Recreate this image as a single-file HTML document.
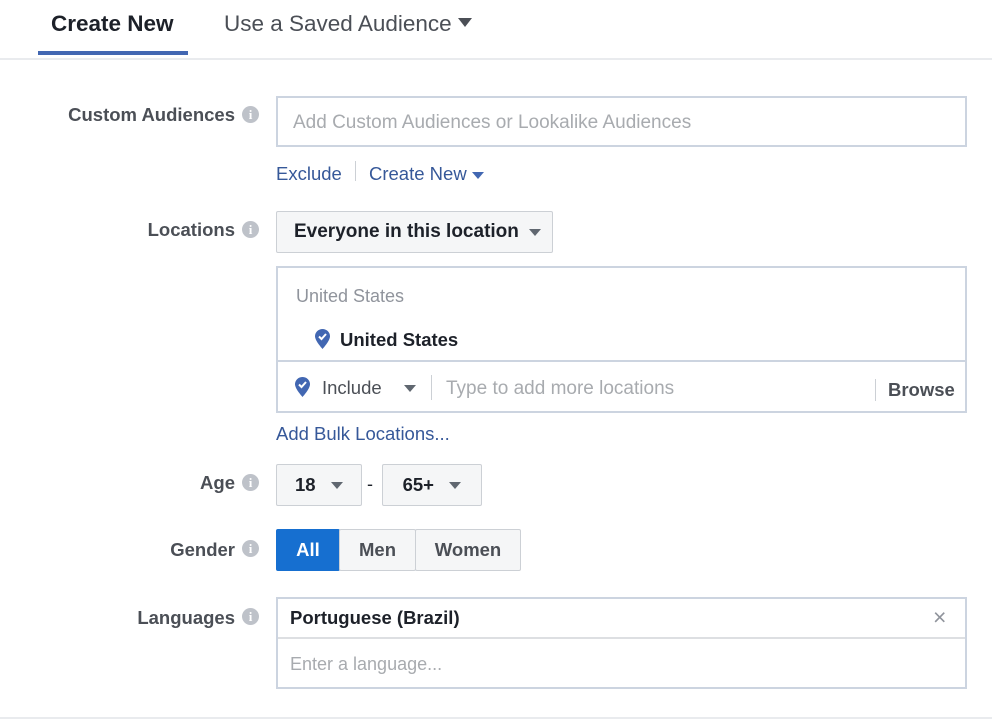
<!DOCTYPE html>
<html><head><meta charset="utf-8"><style>
*{box-sizing:border-box;margin:0;padding:0}
body{width:992px;height:725px;background:#fff;font-family:"Liberation Sans",Arial,sans-serif;position:relative;overflow:hidden;color:#1d2129}
.a{position:absolute;white-space:nowrap}
.lbl{font-size:18.5px;font-weight:bold;color:#4b4f56;text-align:right;width:235px;left:0}
.info{position:absolute;width:17px;height:17px;border-radius:50%;background:#bec2c9;color:#fff;font:bold 13px/17px "Liberation Serif",serif;text-align:center;left:242px}
.link{color:#365899;font-size:18.5px}
.tri{display:inline-block;width:0;height:0;border-left:6px solid transparent;border-right:6px solid transparent;border-top:7px solid #606770;vertical-align:middle}
.btn{position:absolute;background:#f5f6f7;border:1px solid #ccd0d5;border-radius:2px;font-size:18.5px;font-weight:bold;color:#1d2129;display:flex;align-items:center;justify-content:center}
.box{position:absolute;border:2px solid #ccd4e0;background:#fff}
</style></head><body>
<div class="a" style="left:51px;top:11px;font-size:22.5px;font-weight:bold;color:#1d2129">Create New</div>
<div class="a" style="left:38px;top:51px;width:150px;height:4px;background:#4267b2"></div>
<div class="a" style="left:224px;top:11px;font-size:22.5px;color:#4b4f56">Use a Saved Audience <span class="tri" style="border-left-width:7px;border-right-width:7px;border-top-width:9px;border-top-color:#4b4f56;margin-top:-6px"></span></div>
<div class="a" style="left:0;top:58px;width:992px;height:2px;background:#e9ebee"></div>

<div class="a lbl" style="top:104px">Custom Audiences</div><div class="info" style="top:106px">i</div>
<div class="box" style="left:276px;top:96px;width:691px;height:51px"></div>
<div class="a" style="left:293px;top:112px;font-size:19px;color:#a8abaf">Add Custom Audiences or Lookalike Audiences</div>
<div class="a link" style="left:276px;top:163px">Exclude</div>
<div class="a" style="left:355px;top:161px;width:1px;height:20px;background:#ccd0d5"></div>
<div class="a link" style="left:369px;top:163px">Create New <span class="tri" style="border-top-color:#4267b2"></span></div>

<div class="a lbl" style="top:219px">Locations</div><div class="info" style="top:221px">i</div>
<div class="btn" style="left:276px;top:211px;width:277px;height:42px;justify-content:flex-start;padding-left:17px;font-size:19px">Everyone in this location&nbsp;&nbsp;<span class="tri"></span></div>
<div class="box" style="left:276px;top:266px;width:691px;height:147px"></div>
<div class="a" style="left:278px;top:360px;width:687px;height:2px;background:#ccd4e0"></div>
<div class="a" style="left:296px;top:286px;font-size:18px;color:#90949c">United States</div>
<svg class="a" style="left:315px;top:329px" width="15" height="20" viewBox="0 0 15 20"><path d="M7.5 0C3.4 0 0 3.2 0 7.3 0 12 7.5 20 7.5 20S15 12 15 7.3C15 3.2 11.6 0 7.5 0z" fill="#4267b2"/><path d="M4 7.5l2.5 2.5 4.5-5" stroke="#fff" stroke-width="2" fill="none"/></svg>
<div class="a" style="left:340px;top:329px;font-size:18.5px;font-weight:bold">United States</div>
<svg class="a" style="left:295px;top:377px" width="15" height="20" viewBox="0 0 15 20"><path d="M7.5 0C3.4 0 0 3.2 0 7.3 0 12 7.5 20 7.5 20S15 12 15 7.3C15 3.2 11.6 0 7.5 0z" fill="#4267b2"/><path d="M4 7.5l2.5 2.5 4.5-5" stroke="#fff" stroke-width="2" fill="none"/></svg>
<div class="a" style="left:322px;top:377px;font-size:18.5px;color:#4b4f56">Include</div>
<span class="a tri" style="left:404px;top:385px"></span>
<div class="a" style="left:431px;top:375px;width:1px;height:25px;background:#ccd0d5"></div>
<div class="a" style="left:446px;top:378px;font-size:19px;color:#a8abaf">Type to add more locations</div>
<div class="a" style="left:875px;top:379px;width:1px;height:22px;background:#ccd0d5"></div>
<div class="a" style="left:888px;top:379px;font-size:18.5px;font-weight:bold;color:#4b4f56">Browse</div>
<div class="a link" style="left:276px;top:423px">Add Bulk Locations...</div>

<div class="a lbl" style="top:472px">Age</div><div class="info" style="top:474px">i</div>
<div class="btn" style="left:276px;top:464px;width:86px;height:42px">18&nbsp;&nbsp;&nbsp;<span class="tri"></span></div>
<div class="a" style="left:367px;top:474px;font-size:18px">-</div>
<div class="btn" style="left:382px;top:464px;width:100px;height:42px">65+&nbsp;&nbsp;&nbsp;<span class="tri"></span></div>

<div class="a lbl" style="top:539px">Gender</div><div class="info" style="top:540px">i</div>
<div class="btn" style="left:276px;top:529px;width:64px;height:42px;background:#166fd0;border-color:#166fd0;color:#fff">All</div>
<div class="btn" style="left:339px;top:529px;width:77px;height:42px;color:#4b4f56">Men</div>
<div class="btn" style="left:415px;top:529px;width:106px;height:42px;color:#4b4f56">Women</div>

<div class="a lbl" style="top:607px">Languages</div><div class="info" style="top:608px">i</div>
<div class="box" style="left:276px;top:597px;width:691px;height:92px"></div>
<div class="a" style="left:278px;top:637px;width:687px;height:2px;background:#dddfe2"></div>
<div class="a" style="left:290px;top:607px;font-size:18.5px;font-weight:bold">Portuguese (Brazil)</div>
<div class="a" style="left:933px;top:604px;font-size:23px;color:#90949c">×</div>
<div class="a" style="left:290px;top:654px;font-size:18px;color:#a8abaf">Enter a language...</div>
<div class="a" style="left:0;top:717px;width:992px;height:2px;background:#e9ebee"></div>
</body></html>
